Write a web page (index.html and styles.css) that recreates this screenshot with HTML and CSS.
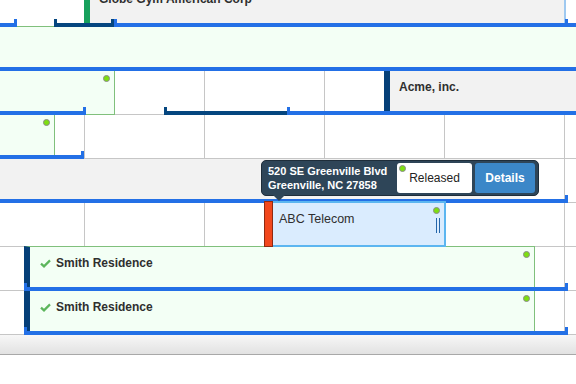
FILE: index.html
```html
<!DOCTYPE html>
<html lang="en">
<head>
  <meta charset="UTF-8">
  <meta name="viewport" content="width=device-width, initial-scale=1.0">
  <title>Crew Schedule</title>
  <link rel="stylesheet" href="styles.css">
</head>
<body>

  <div class="scheduler">
    <div class="timeline">
      <div class="lanes">

        <!-- Lane 0 -->
        <div class="lane">
          <div class="event event-plain stripe-green event-resizable" style="left:84px;width:482px">
            <span class="label">Globe Gym American Corp</span>
          </div>
          <div class="bar">
            <span class="seg tick-r" style="left:-5px;width:22px"></span>
            <span class="seg seg-navy tick-l tick-r" style="left:54px;width:60px"></span>
            <span class="seg tick-l tick-r" style="left:114px;width:454px"></span>
            <span class="seg" style="left:568px;width:40px"></span>
          </div>
        </div>

        <!-- Lane 1 -->
        <div class="lane">
          <div class="event event-open" style="left:-20px;width:620px"></div>
          <div class="bar">
            <span class="seg" style="left:-5px;width:600px"></span>
          </div>
        </div>

        <!-- Lane 2 -->
        <div class="lane">
          <div class="event event-open" style="left:-20px;width:135px">
            <span class="dot"></span>
          </div>
          <div class="event event-plain stripe-navy" style="left:384px;width:300px">
            <span class="label">Acme, inc.</span>
          </div>
          <div class="bar">
            <span class="seg tick-r" style="left:-5px;width:91px"></span>
            <span class="seg seg-navy tick-l" style="left:164px;width:123px"></span>
            <span class="seg tick-l" style="left:287px;width:320px"></span>
          </div>
        </div>

        <!-- Lane 3 -->
        <div class="lane">
          <div class="event event-open" style="left:-20px;width:75px">
            <span class="dot"></span>
          </div>
          <div class="bar">
            <span class="seg tick-r" style="left:-5px;width:89px"></span>
          </div>
        </div>

        <!-- Lane 4 -->
        <div class="lane">
          <div class="event event-plain" style="left:-20px;width:540px"></div>
          <div class="bar">
            <span class="seg tick-r" style="left:-5px;width:573px"></span>
          </div>
        </div>

        <!-- Lane 5 -->
        <div class="lane">
          <div class="event event-selected" style="left:264px;width:182px">
            <span class="label label-light">ABC Telecom</span>
            <span class="dot"></span>
            <span class="handle"></span>
          </div>
        </div>

        <!-- Lane 6 -->
        <div class="lane">
          <div class="event event-open stripe-navy" style="left:24px;width:511px">
            <span class="label">
              <svg class="check" width="11" height="9" viewBox="0 0 11 9"><path d="M1 4.6 L4 7.4 L10 1.4" fill="none" stroke="#5cb65c" stroke-width="2.2"/></svg>
              Smith Residence
            </span>
            <span class="dot"></span>
          </div>
          <div class="bar">
            <span class="seg tick-l tick-r" style="left:24px;width:544px"></span>
          </div>
        </div>

        <!-- Lane 7 -->
        <div class="lane">
          <div class="event event-open stripe-navy" style="left:24px;width:511px">
            <span class="label">
              <svg class="check" width="11" height="9" viewBox="0 0 11 9"><path d="M1 4.6 L4 7.4 L10 1.4" fill="none" stroke="#5cb65c" stroke-width="2.2"/></svg>
              Smith Residence
            </span>
            <span class="dot"></span>
          </div>
          <div class="bar">
            <span class="seg tick-l tick-r" style="left:24px;width:544px"></span>
          </div>
        </div>

      </div>

      <!-- Hover card for ABC Telecom -->
      <div class="tooltip">
        <div class="address">520 SE Greenville Blvd<br>Greenville, NC 27858</div>
        <div class="status"><span class="dot"></span>Released</div>
        <button class="details">Details</button>
      </div>
    </div>

    <div class="scrollbar"></div>
  </div>

</body>
</html>
```

FILE: styles.css
```css
* {
  box-sizing: border-box;
}
body {
  margin: 0;
  font-family: "Liberation Sans", Arial, sans-serif;
  font-size: 12px;
  color: #2f2f2f;
  background: #fff;
}
.scheduler {
  width: 576px;
}
.timeline {
  position: relative;
  height: 335px;
  overflow: hidden;
}
.lanes {
  margin-top: -17px;
}
.lane {
  position: relative;
  height: 44px;
  border-bottom: 1px solid #c6c6c6;
  background: linear-gradient(to right, #c6c6c6 1px, transparent 1px) 84px 0 / 120px 100% repeat-x;
}

/* Events */
.event {
  position: absolute;
  top: -1px;
  height: 45px;
  border: 1px solid transparent;
  z-index: 1;
}
.event-plain {
  top: 0;
  height: 44px;
  border: 0;
  background: #f2f2f2;
}
.event-open {
  background: #f3fff5;
  border-color: #80c07c;
}
.stripe-green {
  border-left: 6px solid #17a05c;
}
.stripe-navy {
  border-left: 6px solid #053f78;
}
.event-resizable {
  border-right: 2px solid #9fc9f0;
}
.event-selected {
  top: -2px;
  height: 46px;
  border: 2px solid #5cb6f0;
  border-left: 0;
  padding-left: 15px;
  background: #daecfe;
  z-index: 3;
}
.event-selected::before {
  content: "";
  position: absolute;
  left: 0;
  top: -2px;
  bottom: -2px;
  width: 7px;
  background: #f2471c;
  border: 1px solid #8f2a12;
}
.label {
  display: flex;
  align-items: center;
  gap: 5px;
  height: 32px;
  padding-left: 9px;
  font-weight: bold;
  white-space: nowrap;
}
.label-light {
  height: 31px;
  padding-left: 0;
  font-size: 12.5px;
  font-weight: normal;
}
.check {
  margin-left: 1px;
}
.dot {
  position: absolute;
  top: 4px;
  right: 4px;
  width: 7px;
  height: 7px;
  border-radius: 50%;
  background: #7ddf10;
  border: 1px solid #8a8a8a;
}
.handle {
  position: absolute;
  top: 15px;
  right: 4px;
  width: 4px;
  height: 15px;
  border-left: 1px solid #2466aa;
  border-right: 1px solid #2466aa;
}

/* Progress bars under each lane */
.bar {
  position: absolute;
  left: 0;
  right: 0;
  bottom: -1px;
  height: 4px;
  z-index: 2;
}
.seg {
  position: absolute;
  top: 0;
  height: 4px;
  background: #2370e6;
}
.seg-navy {
  background: #05467f;
}
.tick-l::before,
.tick-r::after {
  content: "";
  position: absolute;
  top: -4px;
  width: 3px;
  height: 4px;
  background: inherit;
}
.tick-l::before {
  left: 0;
}
.tick-r::after {
  right: 0;
}

/* Tooltip */
.tooltip {
  position: absolute;
  top: 160px;
  left: 261px;
  z-index: 10;
  display: flex;
  align-items: center;
  gap: 3px;
  padding: 2px 3px 2px 6px;
  background: #2e4558;
  border: 1px solid #1e2d3a;
  border-radius: 5px;
  color: #fff;
}
.tooltip::after {
  content: "";
  position: absolute;
  left: 11px;
  top: 100%;
  border: 6px solid transparent;
  border-top-color: #2e4558;
  border-bottom: 0;
}
.address {
  width: 125px;
  margin-right: 1px;
  font-weight: bold;
  font-size: 11px;
  line-height: 14px;
  white-space: nowrap;
}
.status {
  position: relative;
  display: flex;
  align-items: center;
  justify-content: center;
  width: 75px;
  height: 30px;
  background: #fff;
  border-radius: 3px;
  color: #222;
}
.status .dot {
  top: 2px;
  left: 2px;
  right: auto;
}
.details {
  width: 60px;
  height: 30px;
  padding: 0;
  border: 0;
  border-radius: 3px;
  background: #3b87c8;
  color: #fff;
  font: bold 12px "Liberation Sans", Arial, sans-serif;
}

.scrollbar {
  height: 20px;
  background: linear-gradient(#f7f7f7, #e2e2e2);
  border-bottom: 1px solid #a8a8a8;
}
```
